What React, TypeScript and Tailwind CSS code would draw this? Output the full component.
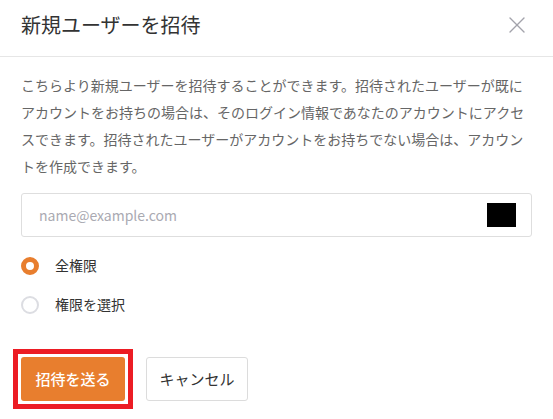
import { X } from 'lucide-react'

export default function App() {
    return (
        <div
            className="w-[553px] h-[419px] bg-white overflow-hidden flex flex-col"
            style={{ fontFamily: '"Noto Sans CJK JP", "Noto Sans", sans-serif' }}
        >
            {/* HEADER */}
            <div className="h-[57px] shrink-0 flex items-center justify-between pl-[21px] pr-[22px] pb-[6px] border-b border-[#e6e6e6]">
                <h2 className="text-[20px] text-[#333] leading-none">新規ユーザーを招待</h2>
                <button className="text-[#a3a3ab]">
                    <X className="w-[28px] h-[28px]" strokeWidth={1.2} />
                </button>
            </div>

            {/* BODY */}
            <div className="px-[21px] pt-[15px] flex flex-col">
                <p className="text-[14px] leading-[27px] text-[#666]">
                    こちらより新規ユーザーを招待することができます。招待されたユーザーが既にアカウントをお持ちの場合は、そのログイン情報であなたのアカウントにアクセスできます。招待されたユーザーがアカウントをお持ちでない場合は、アカウントを作成できます。
                </p>

                <div className="mt-[13px] h-[44px] border border-[#dedede] rounded-[3px] flex items-center justify-between pl-[17px] pr-[15px]">
                    <input
                        type="email"
                        placeholder="name@example.com"
                        className="flex-1 text-[14px] text-[#333] placeholder:text-[#aaaab2] outline-none bg-transparent"
                    />
                    <div className="w-[29px] h-[24px] bg-black" />
                </div>

                <div className="mt-[9px] flex flex-col">
                    <label className="h-[39px] flex items-center gap-[16px]">
                        <span className="w-[18px] h-[18px] rounded-full border-[5px] border-[#e87e2e] bg-white" />
                        <span className="text-[14px] text-[#333]">全権限</span>
                    </label>
                    <label className="h-[39px] flex items-center gap-[16px]">
                        <span className="w-[18px] h-[18px] rounded-full border-2 border-[#dcdde2] bg-white" />
                        <span className="text-[14px] text-[#333]">権限を選択</span>
                    </label>
                </div>

                <div className="mt-[33px] flex items-center gap-[21px]">
                    {/* highlighted action */}
                    <div className="outline-[5px] outline-solid outline-[#ec1c24] outline-offset-[3px]">
                        <button className="block w-[104px] h-[44px] rounded-[3px] bg-[#e87e2e] text-white text-[15px] font-medium">
                            招待を送る
                        </button>
                    </div>
                    <button className="w-[102px] h-[44px] rounded-[3px] border border-[#dcdcdc] bg-white text-[#333] text-[15px]">
                        キャンセル
                    </button>
                </div>
            </div>
        </div>
    )
}
